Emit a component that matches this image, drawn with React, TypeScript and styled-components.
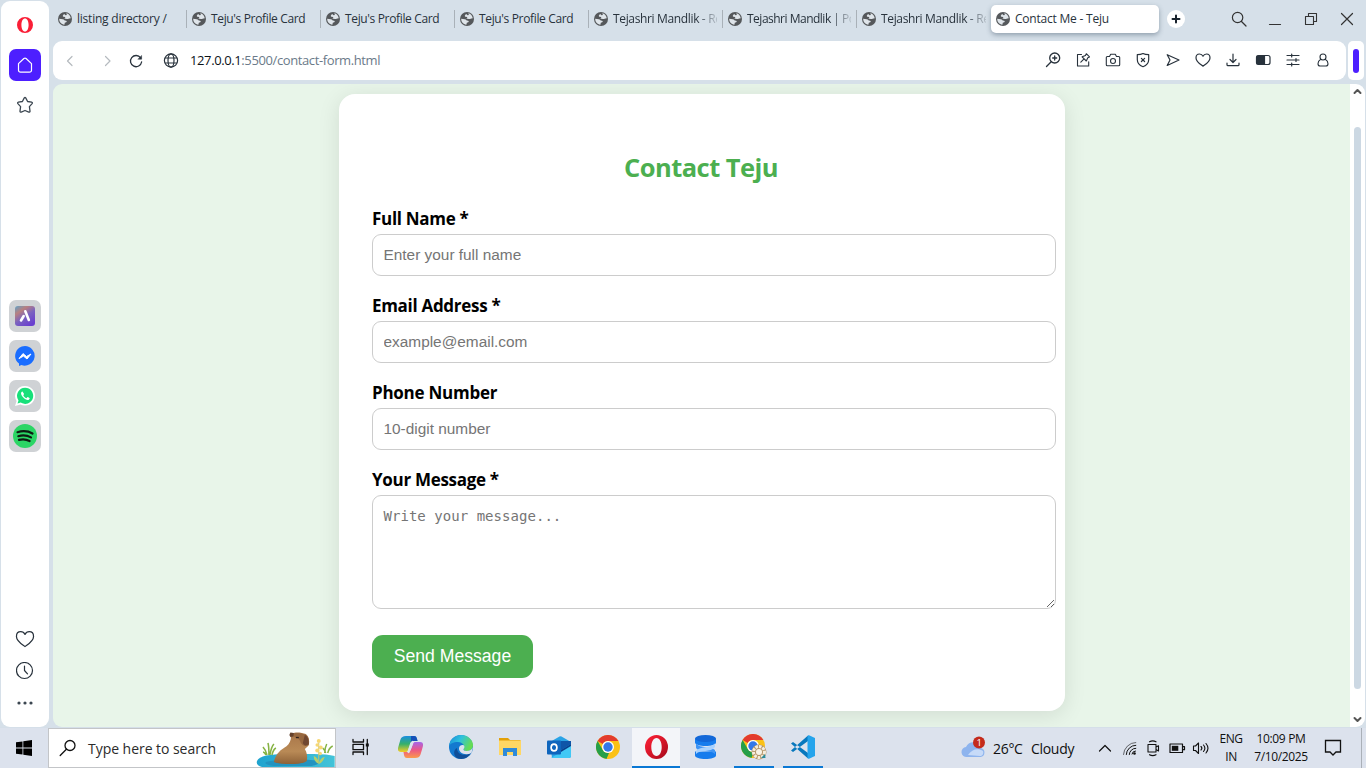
import React from "react";
import styled, { createGlobalStyle } from "styled-components";

const ui = `"Open Sans", "Noto Sans", sans-serif`;
const arial = `"Liberation Sans", Arial, sans-serif`;

const GlobalStyle = createGlobalStyle`
  * { box-sizing: border-box; }
  body { margin: 0; background: #d6e0ea; font-family: ${ui}; overflow: hidden; }
`;

const Desktop = styled.div`
  width: 1366px;
  height: 768px;
  display: flex;
  flex-direction: column;
  overflow: hidden;
`;
const Browser = styled.div`
  height: 727px;
  display: flex;
  background: #d6e0e9;
`;
const Sidebar = styled.aside`
  width: 48px;
  height: 726px;
  margin: 1px 4px 0 1px;
  background: #fff;
  border-radius: 9px;
  display: flex;
  flex-direction: column;
  align-items: center;
  justify-content: space-between;
`;
const SideGroup = styled.div<{ $top?: number; $bottom?: number; $gap: number }>`
  display: flex;
  flex-direction: column;
  align-items: center;
  gap: ${(p) => p.$gap}px;
  padding-top: ${(p) => p.$top ?? 0}px;
  padding-bottom: ${(p) => p.$bottom ?? 0}px;
`;
const SideTile = styled.div<{ $bg?: string }>`
  width: 32px;
  height: 32px;
  border-radius: 7px;
  background: ${(p) => p.$bg ?? "transparent"};
  display: flex;
  align-items: center;
  justify-content: center;
`;
const Main = styled.div`
  width: 1313px;
  display: flex;
  flex-direction: column;
`;
const TabStrip = styled.div`
  height: 41px;
  display: flex;
  align-items: flex-start;
`;
const Tab = styled.div<{ $active?: boolean }>`
  width: ${(p) => (p.$active ? 168 : 134)}px;
  height: 28px;
  margin-top: 5px;
  padding: 0 5px;
  display: flex;
  align-items: center;
  gap: 5px;
  background: ${(p) => (p.$active ? "#fff" : "transparent")};
  border-radius: ${(p) => (p.$active ? "5px" : "0")};
  box-shadow: ${(p) => (p.$active ? "0 2px 5px rgba(60,80,100,.45)" : "none")};
`;
const TabTitle = styled.div<{ $fade?: boolean; $ls: number }>`
  flex: 1;
  min-width: 0;
  font-size: 12px;
  line-height: 18px;
  letter-spacing: ${(p) => p.$ls}px;
  color: #28323c;
  white-space: nowrap;
  ${(p) => p.$fade && "mask-image: linear-gradient(90deg, #000 80%, transparent 104%);"}
`;
const TabDivider = styled.div`
  width: 1px;
  height: 18px;
  margin-right: -5px;
  background: #a9b1b8;
`;
const NewTab = styled.div`
  width: 18px;
  height: 18px;
  margin: 10px 0 0 8px;
  border-radius: 50%;
  background: #fff;
  display: flex;
`;
const WindowButtons = styled.div`
  margin: 10px 0 0 45px;
  display: flex;
  gap: 18px;
`;
const ToolbarRow = styled.div`
  height: 39px;
  display: flex;
  gap: 2px;
`;
const Toolbar = styled.div`
  width: 1293px;
  background: #fff;
  border-radius: 9px;
  display: flex;
  align-items: center;
  padding: 0 14px 0 8px;
`;
const NavIcons = styled.div`
  display: flex;
  align-items: center;
  gap: 19px;
`;
const NavSlot = styled.div<{ $right: number }>`
  margin-right: ${(p) => p.$right}px;
`;
const Address = styled.div`
  flex: 1;
  margin-left: 10px;
  padding-bottom: 1px;
  font-size: 13px;
  line-height: 20px;
  letter-spacing: -0.39px;
  color: #6b7a89;
  b { font-weight: 400; color: #0c1218; }
`;
const ToolIcons = styled.div`
  display: flex;
  gap: 12px;
  padding-bottom: 1px;
`;
const PanelToggle = styled.div`
  width: 16px;
  background: #fff;
  border-radius: 5px;
  display: flex;
  align-items: center;
  justify-content: center;
`;
const PanelBar = styled.div`
  width: 6px;
  height: 24px;
  border-radius: 3px;
  background: #4d1fff;
`;
const Viewport = styled.div`
  width: 1312px;
  height: 643px;
  margin-top: 4px;
  display: flex;
  border-radius: 9px;
  overflow: hidden;
`;
const Page = styled.main`
  width: 1297px;
  background: #e8f5e9;
  padding: 10px 0 0 286px;
`;
const Card = styled.form`
  width: 726px;
  height: 617px;
  margin: 0;
  padding: 54px 33px 33px;
  background: #fff;
  border-radius: 16px;
  box-shadow: 0 4px 22px rgba(0, 0, 0, 0.1);
`;
const Heading = styled.h2`
  margin: 0 0 18px;
  height: 38px;
  padding-right: 2px;
  line-height: 38px;
  text-align: center;
  font-size: 25.5px;
  font-weight: 700;
  letter-spacing: -0.55px;
  color: #4caf50;
`;
const Field = styled.div<{ $h: number }>`
  height: ${(p) => p.$h}px;
`;
const Label = styled.label<{ $ls: number }>`
  display: block;
  height: 30px;
  padding-top: 3px;
  line-height: 24px;
  font-size: 17px;
  font-weight: 700;
  letter-spacing: ${(p) => p.$ls}px;
  color: #000;
`;
const Input = styled.input`
  display: block;
  width: 684px;
  height: 42px;
  padding: 0 10.5px;
  border: 1px solid #ccc;
  border-radius: 9px;
  font: 15.4px ${arial};
  outline: none;
  &::placeholder { color: #757575; }
`;
const TextArea = styled.textarea`
  display: block;
  width: 684px;
  height: 114px;
  padding: 10px 10.5px;
  border: 1px solid #ccc;
  border-radius: 9px;
  font: 14px/20px "DejaVu Sans Mono", monospace;
  letter-spacing: 0.04px;
  resize: vertical;
  outline: none;
  &::placeholder { color: #757575; }
`;
const Submit = styled.button`
  display: block;
  width: 161px;
  height: 43px;
  margin: 0;
  padding: 0;
  border: none;
  border-radius: 11px;
  background: #4caf50;
  color: #fff;
  font: 17.6px ${arial};
`;
const Scrollbar = styled.div`
  width: 15px;
  background: #fff;
  display: flex;
  flex-direction: column;
  align-items: center;
  justify-content: space-between;
  padding: 2px 0;
`;
const Thumb = styled.div`
  width: 7px;
  height: 562px;
  margin-top: 4px;
  border-radius: 4px;
  background: #ccd8e3;
`;
const Taskbar = styled.footer`
  height: 41px;
  background: #dce2ed;
  border-top: 1px solid #d5dfe9;
  display: flex;
`;
const Start = styled.div`
  width: 48px;
  display: flex;
  align-items: center;
  justify-content: center;
`;
const Search = styled.div`
  width: 288px;
  height: 40px;
  background: #fff;
  border: 1px solid #c3c5c8;
  display: flex;
  align-items: center;
  padding-left: 10px;
`;
const SearchText = styled.div`
  width: 169px;
  margin-left: 11px;
  font-size: 14px;
  letter-spacing: -0.04px;
  color: #2b2b2b;
  white-space: nowrap;
`;
const TaskItem = styled.div<{ $w?: number; $open?: boolean; $active?: boolean }>`
  width: ${(p) => p.$w ?? 49}px;
  display: flex;
  align-items: center;
  justify-content: center;
  background: ${(p) => (p.$active ? "#f3f5f9" : "transparent")};
  border-bottom: 2px solid ${(p) => (p.$open ? "#0a78d4" : "transparent")};
`;
const Tray = styled.div`
  margin-left: auto;
  display: flex;
  align-items: center;
  color: #101010;
`;
const Weather = styled.div`
  width: 135px;
  display: flex;
  align-items: center;
  font-size: 14px;
  letter-spacing: -0.3px;
  white-space: nowrap;
`;
const WeatherIcon = styled.span`
  width: 32px;
  height: 26px;
`;
const Temp = styled.span`
  width: 38px;
`;
const TrayIcons = styled.div`
  display: flex;
  align-items: center;
  gap: 6px;
  margin-right: 2px;
`;
const Stack = styled.div<{ $w: number; $ls: number }>`
  width: ${(p) => p.$w}px;
  text-align: center;
  font-size: 12px;
  line-height: 18px;
  letter-spacing: ${(p) => p.$ls}px;
  white-space: nowrap;
`;

type IconProps = {
  size?: number;
  box?: number;
  color?: string;
  w?: number;
  children: React.ReactNode;
};
const IconSvg = styled.svg`
  display: block;
  flex-shrink: 0;
`;
const Icon = ({ size = 18, box = 18, color = "#28323c", w = 1.2, children }: IconProps) => (
  <IconSvg width={size} height={size} viewBox={`0 0 ${box} ${box}`} fill="none" stroke={color} strokeWidth={w} strokeLinejoin="round" strokeLinecap="round">
    {children}
  </IconSvg>
);
const AddressGlobe = styled(IconSvg)`
  margin-left: 17px;
`;

const PageGlobe = () => (
  <Icon size={14} box={14} w={0}>
    <circle cx="7" cy="7" r="7" fill="#55585b" />
    <path d="M6.200 1.900C4.800 2.700 4.400 4 5.300 4.700l1.900.2c.3.900-.4 1.400-1.300 1.700l3 .4c1.400.2 1.900-.6 3.300-.5l.5-.6C12.300 3.500 10.500 1.700 8.300 1.300L8.900 2.900 7.500 3.300z" fill="#dfe5ea" />
    <path d="M1.200 6.800l3.600.4c1.600.3 1.500 1.500 3.200 1.600 1 .2.900 1.200.1 1.500l-1.300.4-.4 2C3.300 12.500 1.100 9.900 1.200 6.800z" fill="#dfe5ea" />
  </Icon>
);
const Heart = ({ size = 18 }: { size?: number }) => (
  <Icon size={size} w={size > 18 ? 1 : 1.2}>
    <path d="M9 15.200C6.500 13.300 2 10.700 2 6.900 2 4.500 3.600 3 5.500 3 7 3 8.300 3.800 9 5.200 9.700 3.800 11 3 12.500 3 14.400 3 16 4.500 16 6.900 16 10.700 11.500 13.300 9 15.200z" />
  </Icon>
);
const ChromeMark = () => (
  <>
    <circle cx="12" cy="12" r="12" fill="#fbc116" />
    <path d="M1.600 6A12 12 0 0 1 22.400 6H12a6 6 0 0 0-5.200 3z" fill="#e33b2e" />
    <path d="M1.600 6 6.800 15A6 6 0 0 0 12 18l1.800-.3L11 24A12 12 0 0 1 1.600 6z" fill="#269f49" />
    <path d="M17.200 15 12 24h-1.500L13 18z" fill="#fbc116" />
    <circle cx="12" cy="12" r="6" fill="#fff" />
    <circle cx="12" cy="12" r="4.700" fill="#3478e8" />
  </>
);

const tabs = [
  { title: "listing directory /", ls: -0.22 },
  { title: "Teju's Profile Card", ls: -0.35 },
  { title: "Teju's Profile Card", ls: -0.35 },
  { title: "Teju's Profile Card", ls: -0.35 },
  { title: "Tejashri Mandlik - Re", ls: -0.35, fade: true },
  { title: "Tejashri Mandlik | Po", ls: -0.5, fade: true },
  { title: "Tejashri Mandlik - Re", ls: -0.35, fade: true },
];

const SideBarPanel = () => (
  <Sidebar>
    <SideGroup $gap={8} $top={8}>
      <SideTile>
        <Icon box={16} size={16} w={0}>
          <path fillRule="evenodd" fill="#fa1e36" d="M8 0a8 8 0 1 0 0 16A8 8 0 0 0 8 0zm0 1.500c2.100 0 3.600 2.700 3.600 6.500S10.100 14.500 8 14.500 4.400 11.800 4.400 8 5.900 1.500 8 1.500z" />
        </Icon>
      </SideTile>
      <SideTile $bg="#4d1fff">
        <Icon color="#fff"><path d="M2.500 7.600 7.900 2.500q1.100-.9 2.200 0l5.400 5.100v6.600a2 2 0 0 1-2 2h-9a2 2 0 0 1-2-2z" /></Icon>
      </SideTile>
      <SideTile>
        <Icon color="#3b4650" w={1.300}><path d="M8.300 1.900q.7-1 1.400 0L11.600 5.500l4 .7q1.300.4.500 1.400l-2.700 3 .6 4.600q0 1.200-1.200.9L9 14.500l-3.800 1.600q-1.200.3-1.200-.9l.6-4.600-2.700-3q-.8-1 .5-1.400l4-.7z" /></Icon>
      </SideTile>
    </SideGroup>
    <SideGroup $gap={8} $top={2}>
      <SideTile $bg="#cfd2d5">
        <svg width="20" height="20" viewBox="0 0 20 20">
          <defs>
            <linearGradient id="aria" x1="0" y1="0" x2=".7" y2="1">
              <stop offset="0" stopColor="#5ea3c8" /><stop offset=".3" stopColor="#b88080" /><stop offset=".6" stopColor="#7a62c0" /><stop offset="1" stopColor="#6a3fd0" />
            </linearGradient>
          </defs>
          <rect width="20" height="20" rx="3" fill="url(#aria)" />
          <path d="M10.300 5.300 13.800 14M8.700 10 6 14.500" stroke="#fff" strokeWidth="2.600" strokeLinecap="round" />
        </svg>
      </SideTile>
      <SideTile $bg="#cfd2d5">
        <svg width="20" height="20" viewBox="0 0 20 20">
          <path d="M10 0a10 9.800 0 1 1-3.500 19.100L4 20v-2.500A9.800 9.800 0 0 1 10 0z" fill="#1a6dff" />
          <path d="m4 12.600 4-5 3.500 2.900L16 8l-4 5-3.500-2.900z" fill="#fff" stroke="#fff" strokeLinejoin="round" />
        </svg>
      </SideTile>
      <SideTile $bg="#cfd2d5">
        <svg width="20" height="20" viewBox="0 0 20 20">
          <path d="M10.200 0a9.800 9.800 0 1 1-4.700 18.400L0 20l1.600-5A9.800 9.800 0 0 1 10.200 0z" fill="#fff" />
          <path d="M10.200 1.700a8.100 8.100 0 1 1-4.500 14.900l-3.200.9 1-3.100a8.100 8.100 0 0 1 6.700-12.700z" fill="#18e07a" />
          <path d="M7.500 5.500c-2 .5-2 3 .6 5.800s5.400 3.700 6.500 1.500c.2-.7 0-1-2.100-1.800l-1.100 1.200c-1.400-.5-2.500-1.600-3.100-3l.8-1.100z" fill="#fff" />
        </svg>
      </SideTile>
      <SideTile $bg="#cfd2d5">
        <svg width="24" height="24" viewBox="0 0 24 24">
          <circle cx="12" cy="12" r="12" fill="#2bd565" />
          <path d="M4.500 8.200c5-1.500 11-1 15 1.300M5.300 12.200c4.300-1.200 9-.8 12.700 1.200M6 15.900c3.600-1 7.400-.6 10.600 1.100" stroke="#0d1b12" strokeWidth="2.200" fill="none" strokeLinecap="round" />
        </svg>
      </SideTile>
    </SideGroup>
    <SideGroup $gap={12} $bottom={17}>
      <Heart size={22} />
      <Icon><circle cx="8.500" cy="8.500" r="8" /><path d="M8.500 4V8.500l3 3.300" /></Icon>
      <Icon w={0}><circle cx="3" cy="11" r="1.600" fill="#3b4650" /><circle cx="9" cy="11" r="1.600" fill="#3b4650" /><circle cx="15" cy="11" r="1.600" fill="#3b4650" /></Icon>
    </SideGroup>
  </Sidebar>
);

const ToolbarIcons = () => (
  <ToolIcons>
    <Icon w={1.300}><circle cx="10.700" cy="7" r="5" /><path d="M7.200 10.700 2.500 15.500M10.700 5v4M8.700 7h4" /></Icon>
    <Icon w={1.100}><path d="M7.500 3.500H3.500v11.500h11.200V10.800M6.800 11.200l3-3M12.300 2.700l3.200 3.200-1.700.8-1.500 3.300-4.200-4.200L11.500 4.400z" /></Icon>
    <Icon w={1.100}><path d="M2.300 6.500q0-1 1-1h2.200l1.200-2.200h4.600l1.200 2.200h2.200q1 0 1 1v7.300q0 1-1 1H3.300q-1 0-1-1z" /><circle cx="9" cy="10" r="2.500" /></Icon>
    <Icon w={1.200}><path d="M9 2.500c2 1.100 3.800 1.200 5.700 1.200v4.900c0 3.700-2.400 6-5.700 7.100-3.300-1.100-5.700-3.400-5.700-7.100V3.700c1.900 0 3.700-.1 5.700-1.200zM7.400 7.300l3.200 3.200M10.600 7.300l-3.200 3.200" /></Icon>
    <Icon w={1.200}><path d="M3.200 3.700 15 9 3.200 14.500 6 9z" /></Icon>
    <Heart />
    <Icon w={1.200}><path d="M9 3v8M6 8.500l3 3 3-3M3 12v1.700q0 1 1 1h10q1 0 1-1V12" /></Icon>
    <Icon w={1.200}><rect x="2.500" y="4.500" width="13.500" height="9" rx="2" /><path d="M3 5h7.500v8H3z" fill="#28323c" /></Icon>
    <Icon w={1.200}><path d="M3 4.500h12M3 9h12M3 13.500h12M7.700 3v3M12 7.500v3M7.700 12v3" /></Icon>
    <Icon w={1.100}><circle cx="9" cy="6" r="3" /><path d="M6.500 8.500C4.800 9.400 4 11 4 12.700c0 1.600.7 2.300 2.200 2.300h5.600c1.500 0 2.200-.7 2.200-2.300 0-1.700-.8-3.300-2.500-4.200" /></Icon>
  </ToolIcons>
);

const Capybara = () => (
  <svg width="79" height="38" viewBox="0 0 79 38">
    <defs>
      <linearGradient id="fur" x1="0" y1="0" x2="0" y2="1"><stop offset="0" stopColor="#a87549" /><stop offset=".6" stopColor="#b98a56" /><stop offset="1" stopColor="#8e6238" /></linearGradient>
      <linearGradient id="pond" x1="0" y1="0" x2="1" y2="0"><stop offset="0" stopColor="#1fa3cf" /><stop offset="1" stopColor="#43c3d8" /></linearGradient>
    </defs>
    <path d="M1 32C3 27 14 25 30 25h28c9 0 16 1 21 2v11H6C2 37 0 35 1 32z" fill="url(#pond)" />
    <path d="M10 33c8-3 40-4 52-1 3 2 0 4-6 5H18c-6-1-10-2-8-4z" fill="#2393c0" />
    <path d="M11 26c-1-4-2-6-4-8M13 26c0-6 0-9-1-12M14 26c1-6 2-9 4-11M16 26c1-4 2-6 4-7M10 26c-1-2-2-3-3-3" stroke="#86b344" strokeWidth="1.600" fill="none" />
    <path d="M18 33c1-6 5-11 10-14 4-2 6-5 7-9V5l2-1c2-1 9-1 13 1 3 2 4 7 3 11-1 2-3 3-4 4 2 3 3 8 2 12-4 3-10 3-16 3-7 0-13 0-17-2z" fill="url(#fur)" />
    <path d="M36 5c3-2 10-1 14 1 3 2 4 6 3 10-3 2-6 1-8-2-1-4-4-6-9-7z" fill="#96673f" />
    <path d="M49 6c3 1 4 5 4 9-2 2-5 2-6-1z" fill="#6f4731" />
    <path d="M33.500 6l1-2.500 3.500.5-.5 3.500-3 .5z" fill="#63402c" />
    <path d="M40 8.500h3" stroke="#2d1f1b" strokeWidth="1.300" />
    <path d="M69 24c0-4 1-7 2-9M72 24c1-4 3-6 5-7M70 24c-1-3-2-4-3-5" stroke="#86b344" strokeWidth="1.500" fill="none" />
    <path d="M63 34V14" stroke="#c9c56a" strokeWidth="1" /><path d="M63 35c-4-2-5-5-5-8 3 1 5 4 5 8zM63 35c3-1 5-4 6-7-3 0-5 3-6 7z" fill="#b5cf6a" />
    <g fill="#f7d774"><circle cx="63" cy="12" r="2" /><circle cx="61.500" cy="16" r="1.800" /><circle cx="65" cy="18.500" r="2" /><circle cx="61.500" cy="21.500" r="2" /><circle cx="64.500" cy="24.500" r="1.700" /></g>
  </svg>
);

const TaskIcons = () => (
  <>
    <TaskItem $w={49}>
      <Icon color="#111" size={18} w={1.300}><path d="M1 1.500v2.500h10.500V1.500M1 16.500V14h10.500v2.500M1 6.300h10.500v5.400H1zM15.300 1.500v15" /><path d="M13.800 5.500h3v3h-3z" fill="#111" strokeWidth="0" /></Icon>
    </TaskItem>
    <TaskItem $w={51}>
      <svg width="25" height="22" viewBox="0 0 25 22">
        <defs>
          <linearGradient id="cpA" x1="0" y1="0" x2="0" y2="1"><stop offset="0" stopColor="#1a8ee0" /><stop offset=".5" stopColor="#35b06b" /><stop offset="1" stopColor="#f6cd25" /></linearGradient>
          <linearGradient id="cpB" x1="0" y1="0" x2="0" y2="1"><stop offset="0" stopColor="#a565ea" /><stop offset=".5" stopColor="#ec5785" /><stop offset="1" stopColor="#fb9a4b" /></linearGradient>
        </defs>
        <path d="M8 0h8c2 0 2.500 1 3 3l.5 2h-4c-2 0-3 1-3.600 3l-2 6.500C9.400 16 8.500 16 7 16H3c-3 0-3.500-2-2.700-5l2-7C3.200 1 5 0 8 0z" fill="url(#cpA)" />
        <path d="M13 0h3c2 0 2.500 1 3 3l.5 2h-4c-1 0-2 .5-2.600 1.500z" fill="#1550b8" />
        <path d="M17 22H9c-2 0-2.500-1-3-3l-.5-3H9.500c2 0 3-1 3.600-3l2-5.500c.5-1.500 1.400-1.500 2.900-1.500h4c3 0 3.500 2 2.700 5l-2 7c-.9 3-2.700 4-5.700 4z" fill="url(#cpB)" />
        <path d="M14.500 6 10.500 16" stroke="#dce2ed" strokeWidth="2.200" strokeLinecap="round" />
      </svg>
    </TaskItem>
    <TaskItem>
      <svg width="24" height="24" viewBox="0 0 24 24">
        <defs>
          <linearGradient id="edA" x1="0" y1="0" x2="1" y2=".4"><stop offset="0" stopColor="#1888d8" /><stop offset=".5" stopColor="#2fc1dd" /><stop offset="1" stopColor="#66dc54" /></linearGradient>
        </defs>
        <circle cx="12" cy="12" r="12" fill="#1479cf" />
        <path d="M0 11C1 4 6 0 12 0c7 0 12 5 12 10 0 4-3 6-6.500 6-3 0-3.500-1.300-2.600-2.400C16 11 14 7 9 7 4 7 1 9 0 11z" fill="url(#edA)" />
        <path d="M8 13c0 6 6 9 14 5-3 5-8 7-13 5.500C4 21 4 15 8 13z" fill="#114f98" />
        <path d="M14.900 13.600c-.9 1.100-.4 2.400 2.600 2.400 2.500 0 5-1 6.500-4l-1.500 6c-6 3-13 0-12.500-5 .3-2.500 3-3.500 5-2.500.6 1 .6 2-.1 3.100z" fill="#dce2ed" />
      </svg>
    </TaskItem>
    <TaskItem>
      <svg width="22" height="20" viewBox="0 0 22 20">
        <path d="M0 1h9l2 2h10.500v15H0z" fill="#e3a008" /><path d="M0 3.500h22V18H0z" fill="#ffd764" />
        <path d="M4 11h14v8h-4v-4H8v4H4z" fill="#2f8ad8" />
      </svg>
    </TaskItem>
    <TaskItem>
      <svg width="24" height="22" viewBox="0 0 24 22">
        <path d="M3 6 12.500.5q1-.6 2 0L24 6v14a2 2 0 0 1-2 2H5z" fill="#2aa3e6" /><path d="M14 5h10v3L14 14z" fill="#0f55a8" /><path d="M14 14 24 8v3l-10 6z" fill="#0a3f8c" /><path d="M4 22 24 10v10a2 2 0 0 1-2 2z" fill="#41c8f5" />
        <rect y="4.500" width="14" height="14" rx="1" fill="#0e65bd" /><ellipse cx="7" cy="11.500" rx="2.900" ry="3.400" fill="none" stroke="#fff" strokeWidth="1.700" />
      </svg>
    </TaskItem>
    <TaskItem><svg width="24" height="24" viewBox="0 0 24 24"><ChromeMark /></svg></TaskItem>
    <TaskItem $open $active $w={48}>
      <svg width="23" height="24" viewBox="0 0 23 24">
        <defs><linearGradient id="op" x1="0" y1="0" x2="1" y2="1"><stop offset="0" stopColor="#ff2338" /><stop offset=".6" stopColor="#ce1326" /><stop offset="1" stopColor="#a00a1b" /></linearGradient></defs>
        <path fillRule="evenodd" fill="url(#op)" d="M11.500 0a11.500 12 0 1 0 0 24 11.500 12 0 0 0 0-24zm0 3c3.200 0 5.200 4 5.200 9s-2 9-5.200 9-5.200-4-5.200-9 2-9 5.200-9z" />
      </svg>
    </TaskItem>
    <TaskItem $w={50}>
      <svg width="21" height="24" viewBox="0 0 21 24">
        <path d="M0 3.500v4C0 9.500 5 11 10.500 11S21 9.500 21 7.500v-4zM0 16.500v4C0 22.500 5 24 10.500 24S21 22.500 21 20.500v-4z" fill="#167ced" />
        <path d="M1 8.500c4 5 16 3 19 6.500v4C15 14 4 18 1 13z" fill="#3f95f5" /><path d="M20 8.500c-4 4.500-16 3-19 7.500v3C5 14 16 18 20 12z" fill="#a8d2ff" />
        <ellipse cx="10.500" cy="3.500" rx="10.500" ry="3.500" fill="#1267d8" />
      </svg>
    </TaskItem>
    <TaskItem $w={4} />
    <TaskItem $open $w={40}>
      <svg width="26" height="26" viewBox="0 0 26 26">
        <ChromeMark />
        <circle cx="18" cy="18" r="7.500" fill="#b49468" /><circle cx="18" cy="18" r="5.500" fill="none" stroke="#f5eddc" strokeWidth="3" strokeDasharray="2.600 1" /><circle cx="18" cy="18" r="3" fill="#f8f4e8" /><path d="m20 24 4-4 .5 4z" fill="#2d8c9b" />
      </svg>
    </TaskItem>
    <TaskItem $w={9} />
    <TaskItem $open $w={40}>
      <svg width="24" height="24" viewBox="0 0 24 24">
        <path d="M0 8.500 2 7l15 11v5.500zM0 15.500 2 17 17 6V.5z" fill="#0878bd" /><path d="M17.500 0 24 3v18l-6.500 3-1-1.500v-21z" fill="#25a4ec" />
      </svg>
    </TaskItem>
  </>
);

export default function App() {
  return (
    <Desktop>
      <GlobalStyle />
      <Browser>
        <SideBarPanel />
        <Main>
          <TabStrip>
            {tabs.map((t, i) => (
              <Tab key={i}>
                <PageGlobe />
                <TabTitle $fade={t.fade} $ls={t.ls}>{t.title}</TabTitle>
                {i < 6 && <TabDivider />}
              </Tab>
            ))}
            <Tab $active>
              <PageGlobe />
              <TabTitle $ls={-0.22}>Contact Me - Teju</TabTitle>
            </Tab>
            <NewTab><Icon w={2} color="#18222c"><path d="M9 5.500v7M5.500 9h7" /></Icon></NewTab>
            <WindowButtons>
              <Icon color="#333"><circle cx="7.600" cy="7.500" r="5.200" /><path d="m11.500 11.500 4.500 4.500" /></Icon>
              <Icon color="#333"><path d="M3.500 14.500h11" /></Icon>
              <Icon color="#333" w={1.100}><path d="M3.500 6.500h8v8h-8zM6.500 6.500v-3h8v8h-3" /></Icon>
              <Icon color="#333"><path d="m3.500 3.500 11 11M14.500 3.500l-11 11" /></Icon>
            </WindowButtons>
          </TabStrip>
          <ToolbarRow>
            <Toolbar>
              <NavIcons>
                <Icon color="#b5babf"><path d="M11 4.500 6.500 9l4.500 4.500" /></Icon>
                <NavSlot $right={-8}>
                  <Icon color="#b5babf"><path d="M7.500 4.500 12 9l-4.500 4.500" /></Icon>
                </NavSlot>
                <Icon w={1.300}><path d="M13.600 5.800A5.600 5.600 0 1 0 14.600 10" /><path d="M14.600 3.800v3.400h-3.400z" fill="#28323c" strokeWidth=".5" /></Icon>
              </NavIcons>
              <AddressGlobe width="18" height="18" viewBox="0 0 18 18" fill="none" stroke="#28323c" strokeWidth="1.200">
                <circle cx="9" cy="8.500" r="6.600" /><ellipse cx="9" cy="8.500" rx="3" ry="6.600" /><path d="M3 6h12M3 11h12" />
              </AddressGlobe>
              <Address><b>127.0.0.1</b>:5500/contact-form.html</Address>
              <ToolbarIcons />
            </Toolbar>
            <PanelToggle><PanelBar /></PanelToggle>
          </ToolbarRow>
          <Viewport>
            <Page>
              <Card>
                <Heading>Contact Teju</Heading>
                <Field $h={87}>
                  <Label $ls={-0.3}>Full Name *</Label>
                  <Input placeholder="Enter your full name" />
                </Field>
                <Field $h={87}>
                  <Label $ls={-0.3}>Email Address *</Label>
                  <Input placeholder="example@email.com" />
                </Field>
                <Field $h={87}>
                  <Label $ls={-0.25}>Phone Number</Label>
                  <Input placeholder="10-digit number" />
                </Field>
                <Field $h={170}>
                  <Label $ls={-0.3}>Your Message *</Label>
                  <TextArea placeholder="Write your message..." />
                </Field>
                <Submit type="button">Send Message</Submit>
              </Card>
            </Page>
            <Scrollbar>
              <Icon size={11} box={11} color="#555" w={2}><path d="m2.500 7 3-3 3 3" /></Icon>
              <Thumb />
              <Icon size={11} box={11} color="#555" w={2}><path d="m2.500 4 3 3 3-3" /></Icon>
            </Scrollbar>
          </Viewport>
        </Main>
      </Browser>
      <Taskbar>
        <Start>
          <svg width="16" height="16" viewBox="0 0 16 16"><path d="M0 2.300 6.500 1.400v6.100H0zM7.300 1.300 16 0v7.500H7.300zM0 8.400h6.500v6.200L0 13.700zM7.300 8.400H16V16l-8.700-1.200z" fill="#000" /></svg>
        </Start>
        <Search>
          <Icon color="#111" w={1.300}><circle cx="11" cy="6.500" r="5" /><path d="m7.400 10.200-6.200 6.300" /></Icon>
          <SearchText>Type here to search</SearchText>
          <Capybara />
        </Search>
        <TaskIcons />
        <Tray>
          <Weather>
            <WeatherIcon>
              <svg width="27" height="26" viewBox="0 0 27 26">
                <path d="M6 22a5 5 0 0 1-1-10 8 8 0 0 1 15 1 4.600 4.600 0 0 1-.5 9z" fill="#8eb4ee" /><path d="M7 20c4-6 10-7 15-4 1 3-1 5-3 5z" fill="#c6daf8" />
                <circle cx="18" cy="7.500" r="6" fill="#c42b1c" />
                <text x="18" y="11" textAnchor="middle" fill="#fff" fontSize="9.500" fontFamily="Open Sans">1</text>
              </svg>
            </WeatherIcon>
            <Temp>26°C</Temp>
            <span>Cloudy</span>
          </Weather>
          <TrayIcons>
            <Icon color="#111"><path d="m3.500 12 5.500-5.500L14.500 12" /></Icon>
            <Icon color="#111" w={1}><path d="M3.500 15.500A12.500 12.500 0 0 1 15.800 3.500" strokeWidth=".6" /><path d="M6.300 15.500A9.500 9.500 0 0 1 15.800 6.300M9.300 15.500a6.300 6.300 0 0 1 6.500-6.200M12 15a3.600 3.600 0 0 1 3.500-3" /><circle cx="14.500" cy="14.500" r="1.300" fill="#111" strokeWidth="0" /></Icon>
            <Icon color="#111" w={1.100}><path d="M5.500 2.800c2-1.100 4.500-1.100 6.500 0M5.500 15.700c2 1.100 4.500 1.100 6.500 0M4 5.500h8v7.500H4zM12 8l2.500-1.300v5.200L12 10.600" /></Icon>
            <Icon color="#111" w={1.200}><path d="M2 5h12.500v8.500H2zM15 7.700h1.500v3H15" /><path d="M3.800 6.800h6.500v5H3.800z" fill="#111" strokeWidth="0" /></Icon>
            <Icon color="#111" w={1.100}><path d="M1.500 7h2l3-3v10.500l-3-3h-2zM9 7.500c1 1 1 2.500 0 3.500M11.500 6c1.700 2 1.700 4.500 0 6.500M14 4.500c2.500 3 2.500 6.500 0 9.500" /></Icon>
          </TrayIcons>
          <Stack $w={38} $ls={-0.4}>ENG<br />IN</Stack>
          <Stack $w={62} $ls={-0.35}>10:09 PM<br />7/10/2025</Stack>
          <svg width="54" height="40" viewBox="0 0 54 40" fill="none" stroke="#111" strokeWidth="1.300"><path d="M13.500 12.500h15v11.500h-4.500l-3 3-3-3h-4.500z" /><path d="M49.500 0v40" stroke="#aab0b8" strokeWidth="1" /></svg>
        </Tray>
      </Taskbar>
    </Desktop>
  );
}
